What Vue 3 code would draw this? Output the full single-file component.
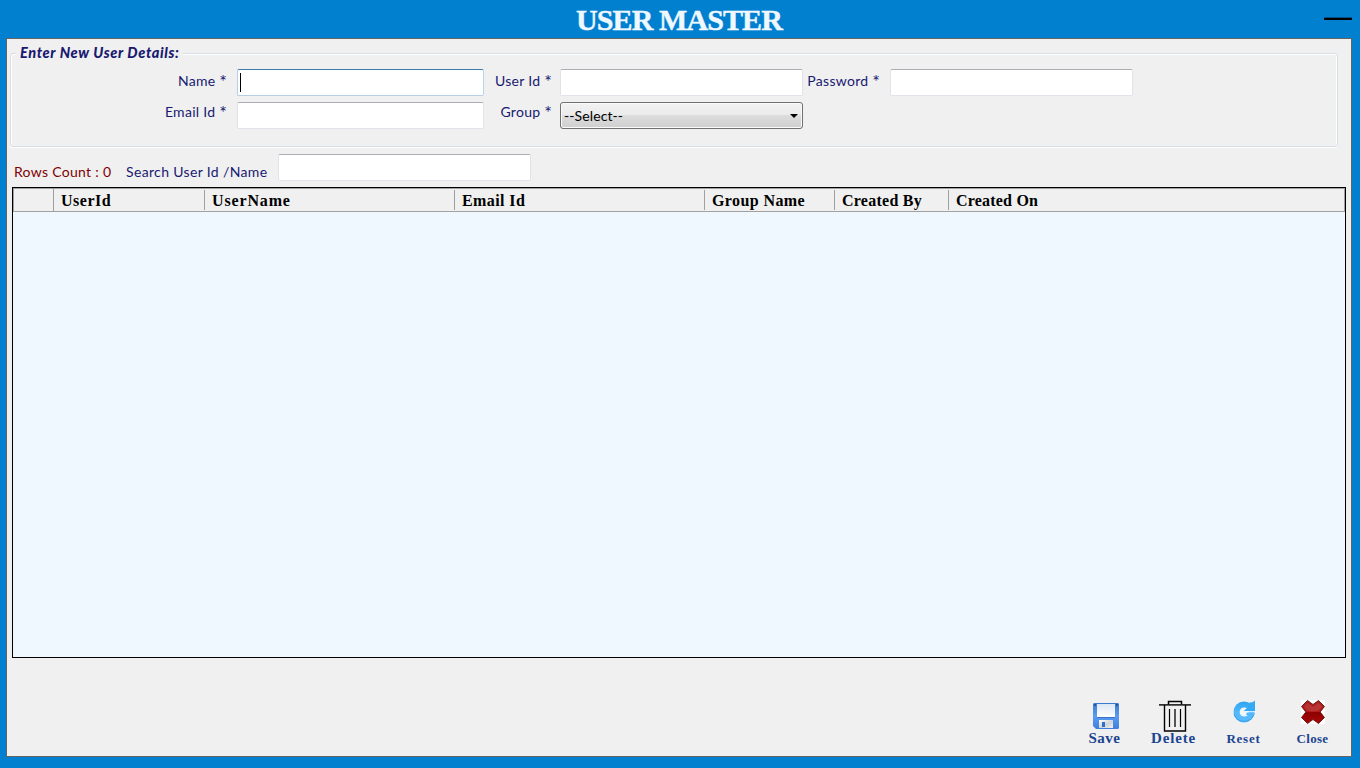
<script setup>
import { ref } from 'vue'

const columns = [
  { label: '', w: 40, cls: 'c0' },
  { label: 'UserId', w: 151, cls: 'c1' },
  { label: 'UserName', w: 250, cls: 'c2' },
  { label: 'Email Id', w: 250, cls: 'c3' },
  { label: 'Group Name', w: 130, cls: 'c4' },
  { label: 'Created By', w: 114, cls: 'c5' },
  { label: 'Created On', w: 394, cls: 'c6' }
]
const name = ref('')
const userId = ref('')
const password = ref('')
const email = ref('')
const search = ref('')
</script>

<template>
  <div class="window">
    <header class="titlebar">
      <h1><span>USER MASTER</span></h1>
      <button class="minimize" aria-label="Minimize"></button>
    </header>
    <main class="panel">
      <section class="group">
        <h2 class="legend"><span>Enter New User Details:</span></h2>
        <div class="form">
          <label class="l-name">Name <b>*</b></label>
          <div class="field focused"><i class="caret"></i><input v-model="name" /></div>
          <label class="l-user">User Id <b>*</b></label>
          <div class="field"><input v-model="userId" /></div>
          <label class="l-pass">Password <b>*</b></label>
          <div class="field"><input v-model="password" type="password" /></div>
          <label class="l-email">Email Id <b>*</b></label>
          <div class="field"><input v-model="email" /></div>
          <label class="l-group">Group <b>*</b></label>
          <div class="combo">
            <span>--Select--</span>
            <svg width="8" height="4" viewBox="0 0 8 4"><path d="M0 0h8L4 4z" fill="#000" /></svg>
          </div>
        </div>
      </section>

      <div class="filter">
        <span class="count">Rows Count : 0</span>
        <span class="search-label">Search User Id /Name</span>
        <div class="field search"><input v-model="search" /></div>
      </div>

      <section class="table">
        <div class="thead">
          <div v-for="c in columns" :key="c.cls" class="th" :class="c.cls" :style="{ width: c.w + 'px' }">
            <span>{{ c.label }}</span>
          </div>
        </div>
      </section>

      <footer class="actions">
        <button class="action save">
          <svg width="26" height="26" viewBox="0 0 26 26">
            <defs>
              <linearGradient id="disk" x1="0" y1="0" x2="0" y2="1"><stop offset="0" stop-color="#3c78cf" /><stop offset=".5" stop-color="#5a9cf2" /><stop offset="1" stop-color="#3f7fdc" /></linearGradient>
              <linearGradient id="paper" x1="0" y1="0" x2="0" y2="1"><stop offset="0" stop-color="#dbe7f3" /><stop offset="1" stop-color="#fff" /></linearGradient>
              <linearGradient id="metal" x1="0" y1="0" x2="1" y2="1"><stop offset="0" stop-color="#fff" /><stop offset=".55" stop-color="#cfd3d8" /><stop offset="1" stop-color="#f2f2f2" /></linearGradient>
            </defs>
            <path d="M1 0h24l1 1v24l-1 1H3l-3-3V1z" fill="url(#disk)" />
            <path d="M1.3 1.3h1.6v1.5H1.3zM23 1.3h1.6v1.5H23z" fill="#173f83" />
            <path d="M4 1h18v13H4z" fill="url(#paper)" />
            <path d="M4 14.5h18" stroke="#3b74c6" />
            <path d="M6 17h14v8H6z" fill="url(#metal)" />
            <path d="M9 19h3v5H9z" fill="#326fc7" />
          </svg>
          <span>Save</span>
        </button>
        <button class="action delete">
          <svg width="32" height="32" viewBox="0 0 32 32" fill="none" stroke="#000">
            <path d="M9.5 4.5v-3h13v3" stroke-width="1.5" />
            <path d="M0 4.9h32" stroke-width="1.4" />
            <path d="M5.5 5v26h21V5" stroke-width="1.4" />
            <path d="M10.5 9v18M21.5 9v18" stroke-width="1.2" />
            <path d="M16 9v18" stroke="#555" stroke-width="2" />
          </svg>
          <span>Delete</span>
        </button>
        <button class="action reset">
          <svg width="23" height="23" viewBox="0 0 23 23">
            <defs><linearGradient id="arrow" x1="0" y1="0" x2="0" y2="1"><stop offset="0" stop-color="#2da4f0" /><stop offset=".5" stop-color="#52b8fc" /><stop offset="1" stop-color="#5cbcff" /></linearGradient></defs>
            <circle cx="11" cy="12" r="10.500" fill="url(#arrow)" />
            <path d="M1 14A10.500 10.500 0 0 0 21 14" fill="none" stroke="#2b93df" stroke-width=".8" />
            <circle cx="11.200" cy="12" r="4.600" fill="#f0f6fb" />
            <path d="M22 .6V11H10.800L15 7l1.500-4.500Q19.500 3 22 .6z" fill="#35a9f5" />
            <path d="M11 11.800h11.500" stroke="#eef7ff" stroke-width="1.200" />
            <path d="M14 12.400h7.500v2.600H13z" fill="#52b8fc" />
          </svg>
          <span>Reset</span>
        </button>
        <button class="action close">
          <svg width="24" height="24" viewBox="0 0 24 24">
            <defs><linearGradient id="cross" x1="0" y1="0" x2="0" y2="1"><stop offset="0" stop-color="#a52020" /><stop offset=".48" stop-color="#b01c1c" /><stop offset=".52" stop-color="#8e0000" /><stop offset="1" stop-color="#a80808" /></linearGradient></defs>
            <path d="M0 0h24v24H0z" fill="#fff" />
            <path d="M6.500.5 12 4.500 17.500.5l6 6-4.300 5.500 4.300 5.500-6 6-5.500-4-5.500 4-6-6L4.800 12 .5 6.500z" fill="url(#cross)" stroke="#6b1212" stroke-width=".9" />
            <path d="M3 6.500 6.600 3 12 7l5.400-4L21 6.500l-2.500 3.200Q12 13 5.500 9.700z" fill="#d86a6a" opacity=".3" />
          </svg>
          <span>Close</span>
        </button>
      </footer>
    </main>
  </div>
</template>

<style>
body { margin: 0; overflow: hidden; }
</style>

<style scoped>
* { box-sizing: border-box; }
.window {
  width: 1360px; height: 768px; background: #0080cf; padding: 0 8px 11px 6px;
  display: flex; flex-direction: column;
  font-family: Lato, "Liberation Sans", sans-serif; font-size: 14px; color: #191970;
}
button { border: 0; background: none; padding: 0; margin: 0; }
.titlebar { height: 38px; display: flex; justify-content: space-between; flex: none; }
h1 {
  margin: 0 0 0 570px; font: bold 30px/40px "Liberation Serif", serif; color: #f0f8ff;
  white-space: nowrap; letter-spacing: -.9px; -webkit-text-stroke: .4px #f0f8ff;
}
.minimize { width: 28px; height: 3px; background: #000; border-top: 1px solid #00508c; margin-top: 17px; }
.panel {
  width: 1346px; height: 719px; background: #f0f0f0; border: 1px solid #646464; padding-left: 5px;
  display: flex; flex-direction: column;
}
.group {
  width: 1328px; height: 94px; margin: 14px 0 0 -2px; border: 1px solid #d5dfe5; border-radius: 3px;
  box-shadow: inset 1px 1px #fff, inset -1px 0 #fff, 0 1px #fff; flex: none;
}
.legend {
  margin: -11px 0 0 5px; width: 167px; height: 20px; padding-left: 4px; background: #f0f0f0;
  font: italic 900 14.500px/20px Lato, sans-serif; white-space: nowrap; letter-spacing: .65px;
}
.form {
  display: grid; grid-template-columns: 226px 247px 76px 243px 87px 243px;
  grid-template-rows: 27px 27px; row-gap: 6px; margin-top: 6px;
}
label { text-align: right; white-space: nowrap; line-height: 24px; padding-right: 10px; letter-spacing: .3px; }
label b { font-weight: 400; font-size: 18px; line-height: 0; letter-spacing: 0; position: relative; top: 2px; }
.l-user, .l-group { padding-right: 8px; }
.l-email, .l-group { line-height: 20px; }
.field {
  background: #fff; border: 1px solid #e2e3ea; border-top-color: #abadb3; border-radius: 2px;
  display: flex; align-items: center; min-width: 0;
}
.field.focused { border-color: #3d7bad #b7d5ea #b5cfe7 #b5cfe7; }
.field input { border: 0; outline: 0; background: none; width: 100%; height: 20px; min-width: 0; font: inherit; padding: 0 2px; }
.caret { width: 1px; height: 19px; margin: -1px 0 0 2px; background: #000; flex: none; }
.combo {
  border: 1px solid #707070; border-radius: 3px; box-shadow: inset 0 0 0 1px #fafafa;
  background: linear-gradient(#f2f2f2, #ebebeb 48%, #dddddd 50%, #cfcfcf);
  display: flex; justify-content: space-between; align-items: center; padding: 0 4px 0 3px; color: #000;
  letter-spacing: .1px;
}
.filter { height: 40px; display: flex; align-items: flex-start; flex: none; }
.count, .search-label { line-height: 20px; margin-top: 15px; white-space: nowrap; }
.count { color: #800000; width: 112px; padding-left: 2px; letter-spacing: .3px; }
.search-label { width: 154px; padding-left: 2px; letter-spacing: .35px; }
.search { width: 253px; height: 27px; margin-top: 7px; }
.table { width: 1334px; height: 471px; border: 1px solid #000; background: #f0f8ff; flex: none; }
.thead { height: 24px; border: 1px solid #a0a0a0; background: #f0f0f0; display: flex; }
.th {
  height: 20px; margin-top: 1px; border-right: 1px solid #a0a0a0; padding-left: 7px; flex: none;
  font: bold 16px/21px "Liberation Serif", serif; color: #000; white-space: nowrap;
}
.c1 { letter-spacing: .5px; }
.c2 { letter-spacing: .85px; }
.c3, .c4 { letter-spacing: .4px; }
.c5 { letter-spacing: .25px; }
.c6 { letter-spacing: .2px; }
.th:first-child { height: 22px; margin-top: 0; }
.th:last-child { border-right: 0; flex: 0 1 auto; }
.actions { display: flex; margin-top: 42px; height: 50px; padding-left: 1058px; }
.action {
  display: flex; flex-direction: column; align-items: center; justify-content: flex-start; width: 69px;
  font: bold 15px/18px "Liberation Serif", serif; color: #1c4590; white-space: nowrap; height: 47px;
}
.action svg { display: block; flex: none; }
.action span { margin-top: auto; }
.save { letter-spacing: .5px; }
.delete { letter-spacing: .85px; }
.reset { letter-spacing: .75px; }
.close { letter-spacing: .3px; }
.save svg { margin: 3px 0 0 2px; }
.delete svg { margin-left: 2px; }
.delete span { margin-top: -3px; }
.reset, .close { font-size: 13px; height: 48px; }
.reset svg { margin-left: 3px; }
.close svg { margin-left: 2px; }
.close span { margin-left: 2px; }
.reset span { margin-left: 2px; }
</style>
